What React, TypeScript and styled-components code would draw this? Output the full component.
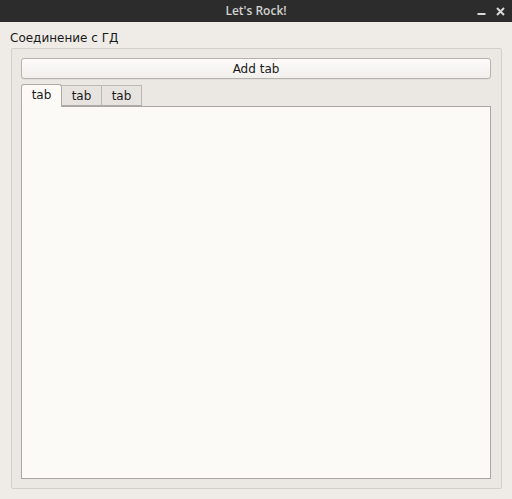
import React, { useState } from "react";
import styled, { createGlobalStyle } from "styled-components";

const Global = createGlobalStyle`
  html, body { margin: 0; padding: 0; }
  body { background: #efece8; font-family: "DejaVu Sans", sans-serif; }
  #root { width: 512px; height: 499px; }
`;

const Window = styled.div`
  width: 512px;
  height: 499px;
  display: flex;
  flex-direction: column;
  background: #efece8;
  overflow: hidden;
`;

const TitleBar = styled.div`
  height: 22px;
  flex: none;
  background: #2c2c2c;
  display: flex;
  align-items: center;
  justify-content: center;
  position: relative;
`;

const Title = styled.div`
  color: #d2d2d2;
  font-family: "Open Sans", sans-serif;
  font-weight: 600;
  font-size: 12px;
  line-height: 22px;
`;

const Controls = styled.div`
  position: absolute;
  right: 7px;
  top: 0;
  height: 22px;
  display: flex;
  align-items: center;
  gap: 10px;
`;

const Body = styled.div`
  flex: 1;
  display: flex;
  flex-direction: column;
  padding: 9px 10px 10px 11px;
`;

const Label = styled.div`
  font-size: 12px;
  line-height: 15px;
  color: #1a1a1a;
  margin-left: -1px;
`;

const Group = styled.div`
  margin-top: 2px;
  flex: 1;
  border: 1px solid #d3d0cb;
  border-radius: 2px;
  background: #ebe8e4;
  display: flex;
  flex-direction: column;
  padding: 9px 10px 9px 9px;
`;

const Button = styled.button`
  height: 21px;
  flex: none;
  border: 1px solid #b6b3ae;
  border-radius: 3px;
  background: linear-gradient(#fdfcfb, #f1efec);
  font-family: "DejaVu Sans", sans-serif;
  font-size: 12px;
  color: #1a1a1a;
  padding: 0;
  box-shadow: 0 1px 0 rgba(0, 0, 0, 0.04);
`;

const TabWidget = styled.div`
  margin-top: 6px;
  flex: 1;
  display: flex;
  flex-direction: column;
`;

const TabBar = styled.div`
  display: flex;
  align-items: flex-end;
  height: 22px;
  flex: none;
  position: relative;
  z-index: 1;
  margin-bottom: -1px;
`;

const Tab = styled.div<{ $active: boolean }>`
  box-sizing: border-box;
  width: ${(p) => (p.$active ? "41px" : "40px")};
  height: ${(p) => (p.$active ? "23px" : "21px")};
  border: 1px solid ${(p) => (p.$active ? "#aeaba7" : "#bcb9b4")};
  border-bottom: ${(p) => (p.$active ? "none" : "1px solid #aeaba7")};
  border-left: ${(p) => (p.$active ? "1px solid #aeaba7" : "none")};
  border-radius: ${(p) => (p.$active ? "3px 3px 0 0" : "0")};
  background: ${(p) => (p.$active ? "#fcfaf7" : "#e7e4e0")};
  font-size: 12px;
  color: #1a1a1a;
  display: flex;
  align-items: center;
  justify-content: center;
  padding-bottom: ${(p) => (p.$active ? "2px" : "0")};
  margin-bottom: ${(p) => (p.$active ? "0" : "1px")};
`;

const Pane = styled.div`
  flex: 1;
  border: 1px solid #a9a7a3;
  background: #fcfaf7;
`;

export default function App() {
  const [active, setActive] = useState(0);
  return (
    <>
      <Global />
      <Window>
        <TitleBar>
          <Title>Let's Rock!</Title>
          <Controls>
            <svg width="9" height="9" viewBox="0 0 9 9">
              <rect x="0.5" y="6" width="8" height="2" fill="#d8d8d8" />
            </svg>
            <svg width="9" height="9" viewBox="0 0 9 9">
              <path d="M1 1 L8 8 M8 1 L1 8" stroke="#d8d8d8" strokeWidth="2" />
            </svg>
          </Controls>
        </TitleBar>
        <Body>
          <Label>Соединение с ГД</Label>
          <Group>
            <Button>Add tab</Button>
            <TabWidget>
              <TabBar>
                {[0, 1, 2].map((i) => (
                  <Tab key={i} $active={i === active} onClick={() => setActive(i)}>
                    tab
                  </Tab>
                ))}
              </TabBar>
              <Pane />
            </TabWidget>
          </Group>
        </Body>
      </Window>
    </>
  );
}
